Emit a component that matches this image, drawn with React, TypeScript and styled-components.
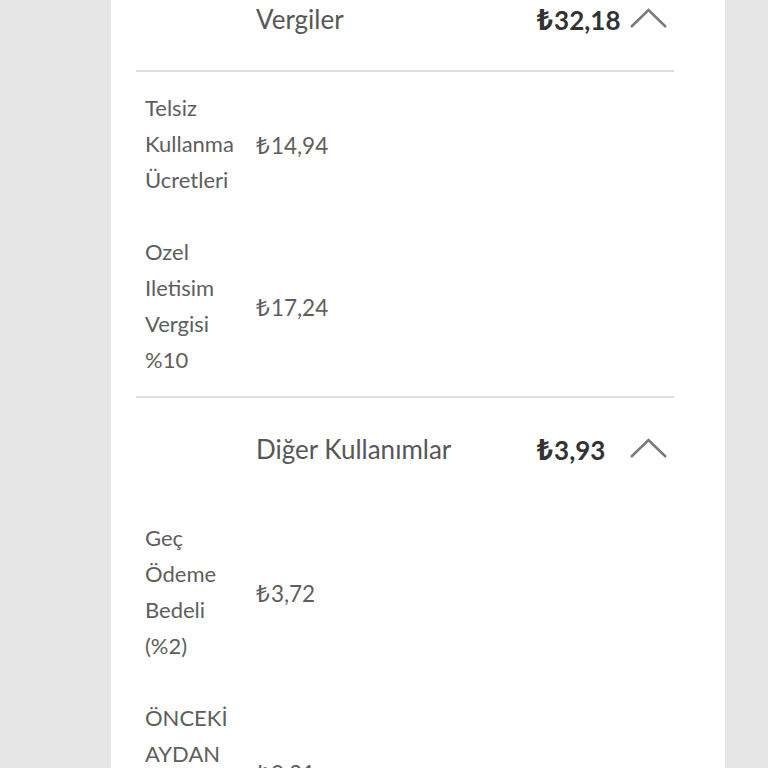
import styled, { createGlobalStyle } from "styled-components";

const GlobalStyle = createGlobalStyle`
  html, body {
    margin: 0;
    padding: 0;
    background: #e6e6e6;
    font-family: Lato, "Open Sans", "DejaVu Sans", sans-serif;
    overflow: hidden;
  }
`;

const Page = styled.div`
  height: 768px;
  overflow: hidden;
`;

const Card = styled.div`
  width: 614px;
  margin: -32px 0 0 111px;
  padding: 0 51px 0 25px;
  box-sizing: border-box;
  background: #fff;
  min-height: 900px;
`;

const Section = styled.section`
  border-bottom: 2px solid #dedede;
  &:last-child {
    border-bottom: none;
  }
`;

const Header = styled.div<{ $divided?: boolean }>`
  display: grid;
  grid-template-columns: 1fr 93px 37px;
  align-items: center;
  height: 102px;
  padding: 0 7px 0 120px;
  border-bottom: 2px solid ${(p) => (p.$divided ? "#dedede" : "transparent")};
`;

const Title = styled.div`
  font-size: 26px;
  color: #575757;
`;

const Total = styled.div`
  font-size: 26px;
  font-weight: 700;
  color: #333;
`;

const Lira = styled.span`
  font-family: "Noto Sans", "DejaVu Sans", sans-serif;
  font-size: 1.08em;
  margin-right: 1px;
`;

const Row = styled.div`
  display: grid;
  grid-template-columns: 111px 1fr;
  align-items: center;
  padding: 18px 0 18px 9px;
`;

const Label = styled.div`
  width: 104px;
  font-size: 22px;
  line-height: 36px;
  color: #5e5e5e;
  overflow-wrap: break-word;
`;

const Value = styled.div`
  font-size: 22.5px;
  color: #5e5e5e;
`;

function Chevron() {
  return (
    <svg width="37" height="22" viewBox="0 0 37 22">
      <polyline
        points="1,19 18.5,2 36,19"
        fill="none"
        stroke="#7a7a7a"
        strokeWidth="2.5"
      />
    </svg>
  );
}

function Money({ amount }: { amount: string }) {
  return (
    <>
      <Lira>₺</Lira>
      {amount}
    </>
  );
}

type Item = { label: string; value: string };

const sections: { title: string; total: string; items: Item[] }[] = [
  {
    title: "Vergiler",
    total: "32,18",
    items: [
      { label: "Telsiz Kullanma Ücretleri", value: "14,94" },
      { label: "Ozel Iletisim Vergisi %10", value: "17,24" },
    ],
  },
  {
    title: "Diğer Kullanımlar",
    total: "3,93",
    items: [
      { label: "Geç Ödeme Bedeli (%2)", value: "3,72" },
      { label: "ÖNCEKİ AYDAN KALAN TUTAR", value: "0,21" },
    ],
  },
];

export default function App() {
  return (
    <Page>
      <GlobalStyle />
      <Card>
        {sections.map((s, i) => (
          <Section key={s.title}>
            <Header $divided={i === 0}>
              <Title>{s.title}</Title>
              <Total>
                <Money amount={s.total} />
              </Total>
              <Chevron />
            </Header>
            {s.items.map((it) => (
              <Row key={it.label}>
                <Label>{it.label}</Label>
                <Value>
                  <Money amount={it.value} />
                </Value>
              </Row>
            ))}
          </Section>
        ))}
      </Card>
    </Page>
  );
}
